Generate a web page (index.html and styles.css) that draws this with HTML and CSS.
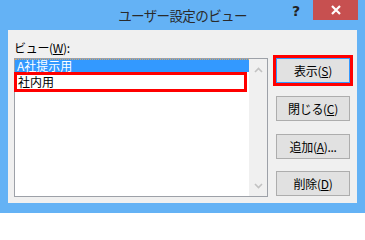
FILE: index.html
```html
<!DOCTYPE html>
<html lang="ja">
<head>
<meta charset="utf-8">
<link rel="stylesheet" href="styles.css">
</head>
<body>
<div class="window">
  <div class="titlebar">
    <div class="title">ユーザー設定のビュー</div>
    <div class="controls">
      <div class="help">?</div>
      <div class="close">
        <svg width="10" height="10" viewBox="0 0 10 10"><path d="M1 1L9 9M9 1L1 9" stroke="#fff" stroke-width="2.2" fill="none"/></svg>
      </div>
    </div>
  </div>
  <div class="client">
    <div class="label">ビュー(<u>W</u>):</div>
    <div class="main">
      <div class="listbox">
        <div class="items">
          <div class="item sel">A社提示用</div>
          <div class="item mark">社内用</div>
        </div>
        <div class="scrollbar">
          <svg width="9" height="6" viewBox="0 0 9 6"><path d="M1 5L4.5 1.5L8 5" stroke="#c2c2c2" stroke-width="1.6" fill="none"/></svg>
          <svg width="9" height="6" viewBox="0 0 9 6"><path d="M1 1L4.5 4.5L8 1" stroke="#c2c2c2" stroke-width="1.6" fill="none"/></svg>
        </div>
      </div>
      <div class="buttons">
        <div class="btn default">表示(<u>S</u>)</div>
        <div class="btn">閉じる(<u>C</u>)</div>
        <div class="btn">追加(<u>A</u>)...</div>
        <div class="btn">削除(<u>D</u>)</div>
      </div>
    </div>
  </div>
</div>
</body>
</html>
```

FILE: styles.css
```css
* { box-sizing: border-box; }
html, body { margin: 0; padding: 0; }
body {
  width: 365px;
  height: 213px;
  overflow: hidden;
  font-family: "Noto Sans CJK JP", "Noto Sans", sans-serif;
  font-size: 12px;
  color: #000;
}
.window {
  width: 365px;
  height: 213px;
  background: #64b2f5;
  display: flex;
  flex-direction: column;
}
.titlebar {
  height: 30px;
  display: grid;
}
.title {
  grid-area: 1 / 1;
  text-align: center;
  font-size: 13.5px;
  line-height: 30px;
  color: #2a2a2a;
  letter-spacing: -0.6px;
}
.controls {
  grid-area: 1 / 1;
  justify-self: end;
  align-self: start;
  display: flex;
  margin-right: 7px;
}
.help {
  width: 26px;
  height: 20px;
  font-family: "DejaVu Sans", sans-serif;
  font-weight: bold;
  font-size: 14px;
  line-height: 22px;
  text-align: center;
  color: #222;
  margin-right: 4px;
}
.close {
  width: 45px;
  height: 20px;
  background: #c75050;
  display: flex;
  align-items: center;
  justify-content: center;
}
.client {
  margin: 0 8px;
  height: 173px;
  background: #f0f0f0;
  padding: 10px 0 0 6px;
}
.label {
  line-height: 15px;
  height: 15px;
  margin-bottom: 3px;
  letter-spacing: -0.3px;
}
.main {
  display: flex;
  gap: 8px;
  align-items: flex-start;
}
.listbox {
  width: 254px;
  height: 139px;
  border: 1px solid #9da1a8;
  background: #fff;
  display: flex;
}
.items {
  flex: 1;
}
.item {
  height: 13px;
  line-height: 13px;
  padding-left: 2px;
  white-space: nowrap;
}
.item.sel {
  background: #3399ff;
  color: #fff;
  border-top: 1px dotted #d9a766;
  line-height: 12px;
}
.item.mark {
  margin-left: -1px;
  width: 233px;
  height: 20px;
  border: 3px solid #ff0000;
  line-height: 14px;
  padding-left: 1px;
}
.scrollbar {
  width: 18px;
  background: #f0f0f0;
  display: flex;
  flex-direction: column;
  justify-content: space-between;
  align-items: center;
  padding: 8px 0 7px;
}
.scrollbar svg { display: block; }
.buttons {
  width: 74px;
  display: flex;
  flex-direction: column;
  gap: 13px;
}
.btn {
  height: 25px;
  border: 1px solid #adadad;
  background: #e1e1e1;
  text-align: center;
  line-height: 23px;
  letter-spacing: -0.3px;
}
.btn.default {
  border-color: #3399ff;
  outline: 3px solid #ff0000;
}
.buttons .btn:last-child { margin-top: -1px; }
```
